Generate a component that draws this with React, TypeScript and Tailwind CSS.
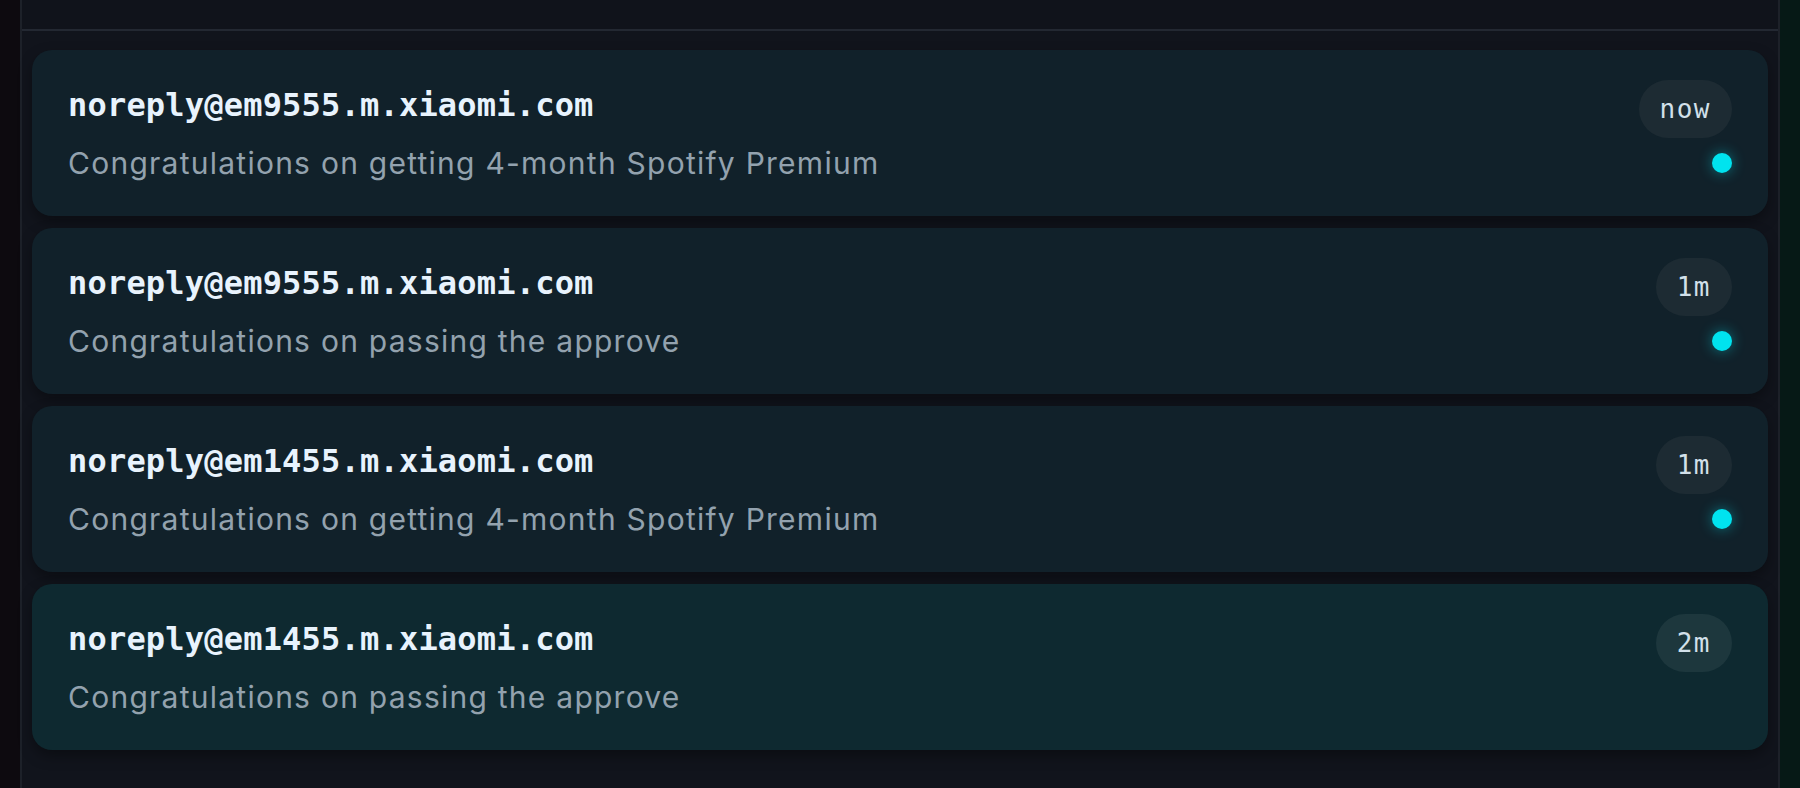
import React from 'react';

const mails = [
  { id: 1, from: 'noreply@em9555.m.xiaomi.com', subject: 'Congratulations on getting 4-month Spotify Premium', time: 'now', unread: true, active: false },
  { id: 2, from: 'noreply@em9555.m.xiaomi.com', subject: 'Congratulations on passing the approve', time: '1m', unread: true, active: false },
  { id: 3, from: 'noreply@em1455.m.xiaomi.com', subject: 'Congratulations on getting 4-month Spotify Premium', time: '1m', unread: true, active: false },
  { id: 4, from: 'noreply@em1455.m.xiaomi.com', subject: 'Congratulations on passing the approve', time: '2m', unread: false, active: true },
];

export default function App() {
  return (
    <div className="flex h-[788px] w-full overflow-hidden bg-[#0d0a0f]">
      <div className="w-[20px] shrink-0 bg-[#0d0a0f]" />

      <div className="flex flex-1 flex-col border-x-2 border-[#1d2129] bg-[#11141c]">
        {/* header strip */}
        <div className="h-[31px] shrink-0 border-b-2 border-[#232832] bg-[#10131b]" />

        <div className="flex flex-col gap-3 px-[10px] pt-[19px]">
          {mails.map(({ id, from, subject, time, unread, active }) => (
            <div
              key={id}
              className={`flex h-[166px] flex-col rounded-[20px] px-9 pt-[30px] shadow-[0_6px_14px_rgba(0,0,0,0.35)] ${
                active ? 'bg-[#0e2930]' : 'bg-[#11212a]'
              }`}
            >
              <div className="flex items-center justify-between">
                <span
                  className="pb-2 text-[32px] font-bold leading-none tracking-[0.2px] text-[#e8f3fd]"
                  style={{ fontFamily: '"DejaVu Sans Mono", monospace' }}
                >
                  {from}
                </span>
                <span
                  className={`flex h-[58px] items-center rounded-full px-[21px] text-[26px] tracking-[1.5px] text-[#d2e0ea] ${
                    active ? 'bg-[#1d373d]' : 'bg-[#1d2b33]'
                  }`}
                  style={{ fontFamily: '"DejaVu Sans Mono", monospace' }}
                >
                  {time}
                </span>
              </div>
              <div className="mt-[5px] flex h-[40px] items-center justify-between">
                <span
                  className="text-[30px] tracking-[1.25px] text-[#93a2ae]"
                  style={{ fontFamily: 'Inter, sans-serif' }}
                >
                  {subject}
                </span>
                {unread && (
                  <span className="h-5 w-5 rounded-full bg-[#00e3ef] shadow-[0_0_14px_rgba(0,227,239,0.45)]" />
                )}
              </div>
            </div>
          ))}
        </div>
      </div>

      <div className="w-[20px] shrink-0 bg-[#061916]" />
    </div>
  );
}
